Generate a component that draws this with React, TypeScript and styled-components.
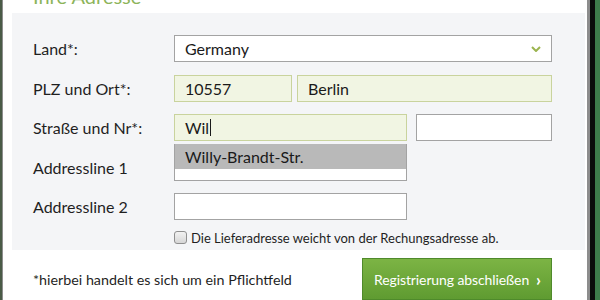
import React from 'react';
import styled, { createGlobalStyle } from 'styled-components';

const GlobalStyle = createGlobalStyle`
  html, body {
    margin: 0;
    padding: 0;
    overflow: hidden;
    background: #ffffff;
  }
  body {
    font-family: Lato, "Open Sans", sans-serif;
    color: #1f1f1f;
  }
`;

const Frame = styled.div`
  display: flex;
  width: 600px;
  height: 300px;
  background: #3e7b4b;
  border-left: 2px solid #4a5b47;
  box-sizing: border-box;
`;

const Card = styled.div`
  display: flex;
  flex-direction: column;
  width: 588px;
  height: 300px;
  background: #ffffff;
  border-left: 1px solid #8d8d8d;
  border-right: 3px solid #8d8d8d;
  padding: 0 2px 0 9px;
  box-sizing: border-box;
`;

const RightRail = styled.div`
  width: 5px;
  background: #0b0b0b;
`;

const Heading = styled.h2`
  margin: -14px 0 7px 21px;
  font-size: 20px;
  line-height: 20px;
  font-weight: 400;
  color: #8db45a;
`;

const Panel = styled.div`
  display: flex;
  flex-direction: column;
  gap: 12.5px;
  height: 242px;
  padding: 22px 33px 0 21px;
  background: #f4f5f7;
  box-sizing: border-box;
`;

const Row = styled.div`
  position: relative;
  display: grid;
  grid-template-columns: 141px 1fr;
  align-items: center;
`;

const Label = styled.label`
  font-size: 16px;
  color: #1f1f1f;
`;

const FieldGroup = styled.div`
  display: flex;
  gap: ${(p: { $gap: number }) => p.$gap}px;
`;

const Field = styled.div<{ $tone?: 'green' | 'white'; $width?: number }>`
  display: flex;
  align-items: center;
  position: relative;
  height: 27px;
  ${(p) => (p.$width ? `width: ${p.$width}px;` : 'flex: 1;')}
  padding-left: 10px;
  box-sizing: border-box;
  font-size: 16px;
  color: #1a1a1a;
  background: ${(p) => (p.$tone === 'green' ? '#f1f5e3' : '#ffffff')};
  border: 1px solid ${(p) => (p.$tone === 'green' ? '#c9d39d' : '#a3a3a3')};
`;

const Caret = styled.span`
  display: inline-block;
  width: 1px;
  height: 17px;
  margin-left: 1px;
  background: #1a1a1a;
`;

const Chevron = styled.svg`
  position: absolute;
  right: 10px;
  top: 50%;
  margin-top: -3px;
`;

const Suggest = styled.div`
  position: absolute;
  left: 141px;
  top: calc(100% + 3px);
  width: 233px;
  height: 25px;
  padding-left: 10px;
  box-sizing: border-box;
  display: flex;
  align-items: center;
  font-size: 16px;
  color: #1a1a1a;
  background: #b9b9b9;
  border-left: 1px solid #a3a3a3;
  border-right: 1px solid #a3a3a3;
  z-index: 2;
`;

const CheckRow = styled.label`
  display: flex;
  align-items: center;
  gap: 4px;
  margin: -3px 0 0 141px;
  font-size: 13px;
  color: #1f1f1f;
`;

const Box = styled.span`
  width: 11px;
  height: 11px;
  border: 1px solid #8f8f8f;
  border-radius: 3px;
  background: linear-gradient(#f2f2f2, #d6d6d6);
`;

const Footer = styled.div`
  display: flex;
  justify-content: space-between;
  align-items: center;
  padding: 8px 33px 0 21px;
`;

const Note = styled.span`
  font-size: 14.3px;
  color: #1f1f1f;
`;

const SubmitButton = styled.button`
  display: flex;
  align-items: center;
  gap: 7px;
  width: 190px;
  height: 42px;
  padding: 0 0 0 11px;
  box-sizing: border-box;
  white-space: nowrap;
  font-family: inherit;
  font-size: 14px;
  letter-spacing: -0.1px;
  color: #ffffff;
  background: linear-gradient(#7cb444, #5f9b31);
  border: 1px solid #4f8a2b;
  border-radius: 0;
  cursor: pointer;
`;

const Arrow = styled.span`
  font-size: 17px;
  font-weight: 700;
  line-height: 1;
`;

const App: React.FC = () => {
  return (
    <>
      <GlobalStyle />
      <Frame>
        <Card>
          <Heading>Ihre Adresse</Heading>
          <Panel>
            <Row>
              <Label>Land*:</Label>
              <Field $tone="white">
                Germany
                <Chevron width="10" height="6" viewBox="0 0 10 6">
                  <polyline points="1,1 5,5 9,1" fill="none" stroke="#9bb44f" strokeWidth="2" />
                </Chevron>
              </Field>
            </Row>
            <Row>
              <Label>PLZ und Ort*:</Label>
              <FieldGroup $gap={5}>
                <Field $tone="green" $width={118}>10557</Field>
                <Field $tone="green">Berlin</Field>
              </FieldGroup>
            </Row>
            <Row>
              <Label>Straße und Nr*:</Label>
              <FieldGroup $gap={9}>
                <Field $tone="green" $width={233}>Wil<Caret /></Field>
                <Field $tone="white" />
              </FieldGroup>
              <Suggest>Willy-Brandt-Str.</Suggest>
            </Row>
            <Row>
              <Label>Addressline 1</Label>
              <FieldGroup $gap={0}>
                <Field $tone="white" $width={233} />
              </FieldGroup>
            </Row>
            <Row>
              <Label>Addressline 2</Label>
              <FieldGroup $gap={0}>
                <Field $tone="white" $width={233} />
              </FieldGroup>
            </Row>
            <CheckRow>
              <Box />
              Die Lieferadresse weicht von der Rechungsadresse ab.
            </CheckRow>
          </Panel>
          <Footer>
            <Note>*hierbei handelt es sich um ein Pflichtfeld</Note>
            <SubmitButton>
              Registrierung abschließen<Arrow>›</Arrow>
            </SubmitButton>
          </Footer>
        </Card>
        <RightRail />
      </Frame>
    </>
  );
};

export default App;
